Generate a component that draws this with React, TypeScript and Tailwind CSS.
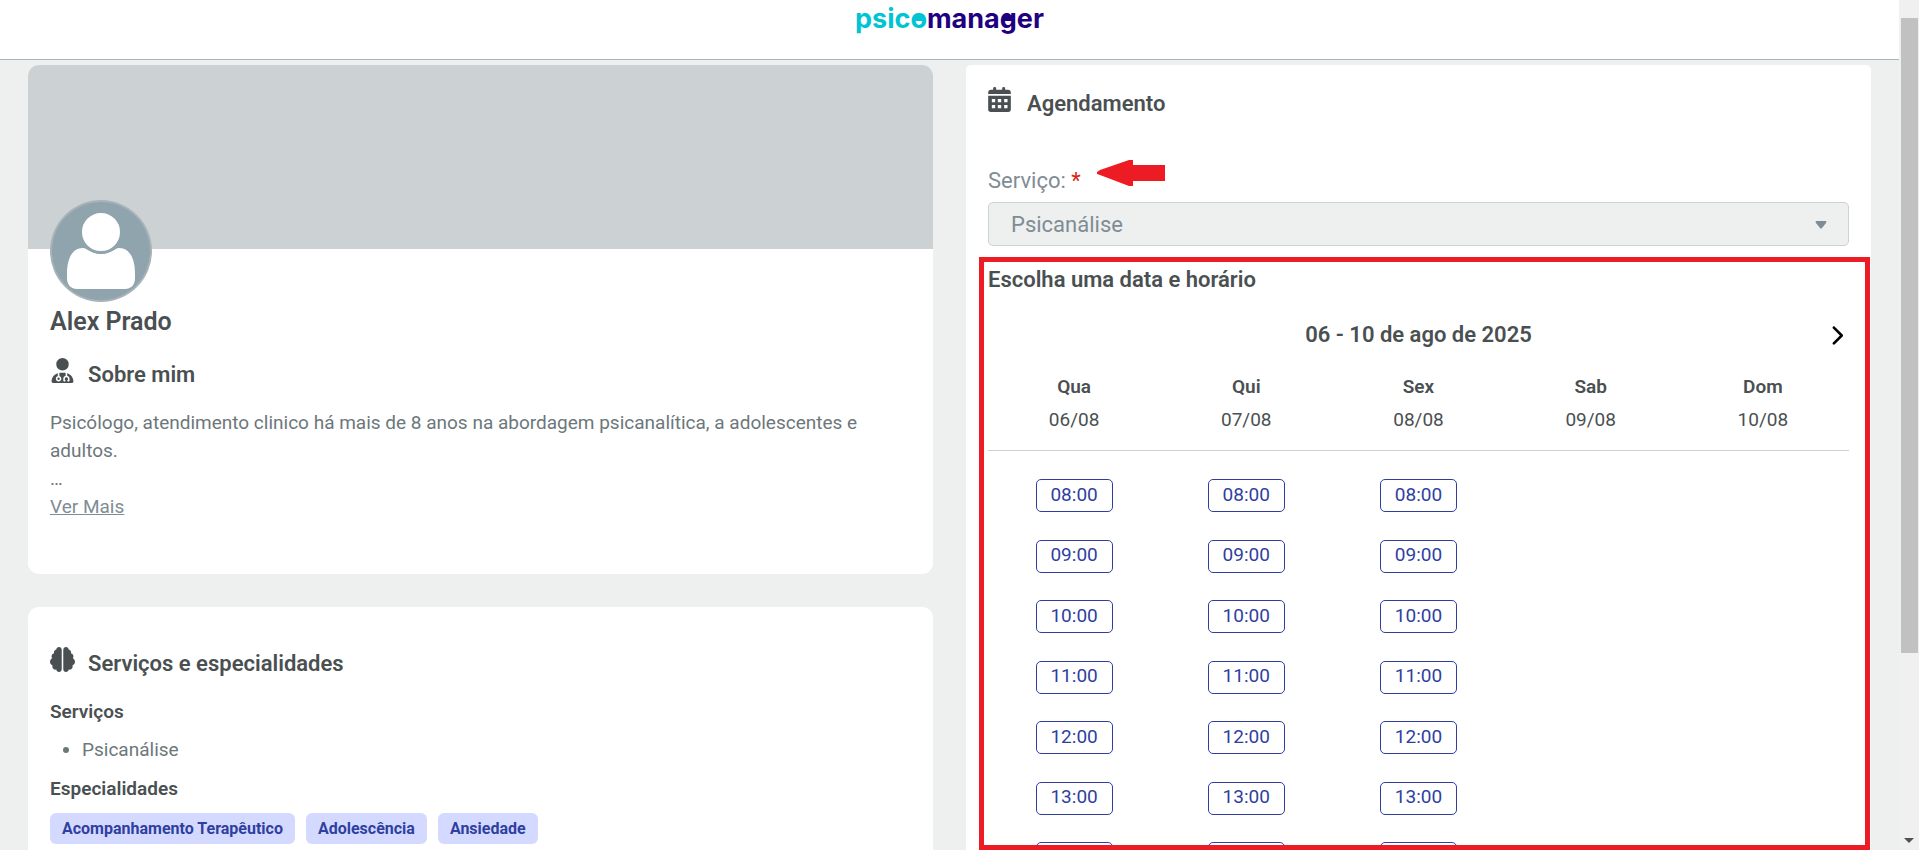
import { FaBrain, FaChevronRight, FaUserDoctor } from 'react-icons/fa6'

const days = [
  { name: 'Qua', date: '06/08', open: true },
  { name: 'Qui', date: '07/08', open: true },
  { name: 'Sex', date: '08/08', open: true },
  { name: 'Sab', date: '09/08', open: false },
  { name: 'Dom', date: '10/08', open: false },
]

const hours = ['08:00', '09:00', '10:00', '11:00', '12:00', '13:00']

const specialties = ['Acompanhamento Terapêutico', 'Adolescência', 'Ansiedade']

const slotClass =
  'h-[33px] w-[77px] rounded-[5px] border border-[#303f9f] pb-[2px] text-[19px] leading-[28px] text-[#303f9f]'

function Logo() {
  return (
    <div className="flex font-['Inter',sans-serif] text-[27px] leading-[38px] font-bold">
      <span className="text-[#00c4d4]">psic</span>
      <span className="relative text-[#00c4d4]">
        o
        <span className="absolute top-[16px] left-[4px] h-[5px] w-[9px] bg-[#00c4d4]" />
      </span>
      <span className="text-[#1f0080]">mana</span>
      <span className="relative text-[#1f0080]">
        g
        <span className="absolute top-[16px] left-[4px] h-[5px] w-[9px] bg-[#1f0080]" />
      </span>
      <span className="text-[#1f0080]">er</span>
    </div>
  )
}

function Avatar() {
  return (
    <svg viewBox="0 0 102 102" className="relative -mt-[49px] size-[102px]" aria-hidden="true">
      <circle cx="51" cy="51" r="51" fill="#a7b3b9" />
      <circle cx="51" cy="51" r="49" fill="#90a4ae" />
      <path
        d="M17 74c0-15 5-26 16-26 4 0 8 6 18 6s14-6 18-6c11 0 16 11 16 26v4c0 7-4 11-10 11H27c-6 0-10-4-10-11z"
        fill="#fff"
      />
      <circle cx="51" cy="32" r="20.5" fill="#fff" stroke="#90a4ae" strokeWidth="3" />
    </svg>
  )
}

function CalendarIcon() {
  return (
    <svg viewBox="0 0 68 75" className="h-[25px] w-[23px]" fill="currentColor" aria-hidden="true">
      <path d="M15 8V4q0-4 4.500-4T24 4v4h18V4q0-4 4.500-4T51 4v4h8q9 0 9 9v4H0v-4q0-9 9-9z" />
      <path
        fillRule="evenodd"
        d="M0 26h68v41q0 8-8 8H8q-8 0-8-8zM11 36v10h10V36zM29 36v10h10V36zM48 36v10h10V36zM11 54v10h10V54zM29 54v10h10V54zM48 54v10h10V54z"
      />
    </svg>
  )
}

function ProfileCard() {
  return (
    <section className="overflow-hidden rounded-[11px] bg-white">
      <div className="h-[184px] bg-[#ccd1d3]" />
      <div className="px-[22px] pb-[53px]">
        <Avatar />
        <h1 className="mt-[4px] text-[25px] leading-[32px] font-semibold text-[#4a5052]">Alex Prado</h1>
        <div className="mt-[20px] flex h-[32px] items-start gap-[13px] text-[#4a5052]">
          <FaUserDoctor className="size-[25px]" />
          <h2 className="pt-[2px] text-[22px] leading-[30px] font-semibold">Sobre mim</h2>
        </div>
        <div className="mt-[19px] text-[19px] leading-[28px] text-[#6c777b]">
          <p>
            Psicólogo, atendimento clinico há mais de 8 anos na abordagem psicanalítica, a adolescentes e adultos.
          </p>
          <p>…</p>
          <a href="#sobre" className="text-[#7f8c94] underline">
            Ver Mais
          </a>
        </div>
      </div>
    </section>
  )
}

function ServicesCard() {
  return (
    <section className="flex-1 rounded-t-[11px] bg-white px-[22px] pt-[40px]">
      <div className="flex items-start gap-[13px] text-[#4a5052]">
        <FaBrain className="size-[25px]" />
        <h2 className="pt-[2px] text-[22px] leading-[30px] font-semibold">Serviços e especialidades</h2>
      </div>
      <h3 className="mt-[19px] text-[19px] leading-[28px] font-semibold text-[#4a5052]">Serviços</h3>
      <ul className="mt-[10px] list-disc pl-[32px] text-[19px] leading-[28px] text-[#6c777b]">
        <li>Psicanálise</li>
      </ul>
      <h3 className="mt-[11px] text-[19px] leading-[28px] font-semibold text-[#4a5052]">Especialidades</h3>
      <div className="mt-[10px] flex gap-[11px]">
        {specialties.map((item) => (
          <span
            key={item}
            className="rounded-[6px] bg-[#d4daff] px-[12px] text-[16px] leading-[31px] font-bold text-[#303f9f]"
          >
            {item}
          </span>
        ))}
      </div>
    </section>
  )
}

function BookingCard() {
  return (
    <section className="relative h-full rounded-t-[5px] bg-white px-[22px] pt-[22px] text-[#4a5052]">
      <div className="flex items-start gap-[16px]">
        <CalendarIcon />
        <h2 className="pt-[2px] text-[22px] leading-[30px] font-semibold">Agendamento</h2>
      </div>

      <div className="mt-[41px] flex items-start gap-[16px]">
        <label htmlFor="servico" className="pt-[3px] text-[22px] leading-[36px] text-[#7f8c94]">
          Serviço: <span className="text-[#d9230f]">*</span>
        </label>
        <svg width="68" height="26" viewBox="0 0 68 26" aria-hidden="true">
          <path d="M0 12 3 10 32 0H36V5H68V21H36V26H32L3 15 0 14Z" fill="#ed1c24" />
        </svg>
      </div>

      <div className="relative mt-[3px]">
        <select
          id="servico"
          className="h-[44px] w-full appearance-none rounded-[5px] border border-[#ccd1d3] bg-[#eef0f0] px-[22px] text-[22px] text-[#7f8c94]"
        >
          <option>Psicanálise</option>
        </select>
        <svg width="12" height="8" viewBox="0 0 12 8" className="pointer-events-none absolute top-[19px] right-[22px]" aria-hidden="true">
          <path d="M1 0H11Q12 1 11 2L7 7Q6 8 5 7L1 2Q0 1 1 0Z" fill="#7f8c94" />
        </svg>
      </div>

      <h3 className="mt-[19px] text-[22px] leading-[30px] font-semibold">Escolha uma data e horário</h3>

      <div className="mt-[25px] flex items-center">
        <div className="w-[26px]" />
        <p className="flex-1 text-center text-[22px] leading-[30px] font-semibold">06 - 10 de ago de 2025</p>
        <button type="button" aria-label="Próxima semana" className="flex w-[26px] justify-center text-black">
          <FaChevronRight className="size-[21px]" />
        </button>
      </div>

      <div className="mt-[22px] grid grid-cols-5 border-b border-[#ccd1d3] pb-[16px] text-center text-[19px]">
        {days.map((day) => (
          <div key={day.name}>
            <p className="leading-[30px] font-semibold">{day.name}</p>
            <p className="pt-[4px] leading-[28px]">{day.date}</p>
          </div>
        ))}
      </div>

      <div className="grid grid-cols-5 pt-[28px]">
        {days.map((day) => (
          <div key={day.name} className="flex h-[396px] flex-col items-center justify-between">
            {day.open && (
              <>
                {hours.map((hour) => (
                  <button key={hour} type="button" className={slotClass}>
                    {hour}
                  </button>
                ))}
                <button type="button" aria-label="14:00" className={slotClass} />
              </>
            )}
          </div>
        ))}
      </div>

      {/* Highlight around the date and time picker */}
      <div className="pointer-events-none absolute top-[192px] right-[1px] bottom-0 left-[13px] border-5 border-[#ed1c24]" />
    </section>
  )
}

function Scrollbar() {
  return (
    <div className="flex w-[20px] flex-col items-center bg-[#f0f0f0] pt-[18px] pb-[7px]">
      <div className="h-[77%] w-[17px] bg-[#c1c1c1]" />
      <svg width="10" height="5" viewBox="0 0 10 5" className="mt-auto" aria-hidden="true">
        <path d="M0 0H10L5 5Z" fill="#505050" />
      </svg>
    </div>
  )
}

export default function App() {
  return (
    <div className="flex h-screen overflow-hidden bg-[#eef0f0] font-['Roboto',sans-serif]">
      <div className="flex min-w-0 flex-1 flex-col">
        <header className="flex h-[60px] shrink-0 justify-center border-b border-[#a9b5bd] bg-white">
          <Logo />
        </header>
        <main className="grid min-h-0 flex-1 grid-cols-2 gap-[33px] pt-[5px] pr-[28px] pl-[28px]">
          <div className="flex min-h-0 flex-col gap-[33px]">
            <ProfileCard />
            <ServicesCard />
          </div>
          <div className="min-h-0">
            <BookingCard />
          </div>
        </main>
      </div>
      <Scrollbar />
    </div>
  )
}
